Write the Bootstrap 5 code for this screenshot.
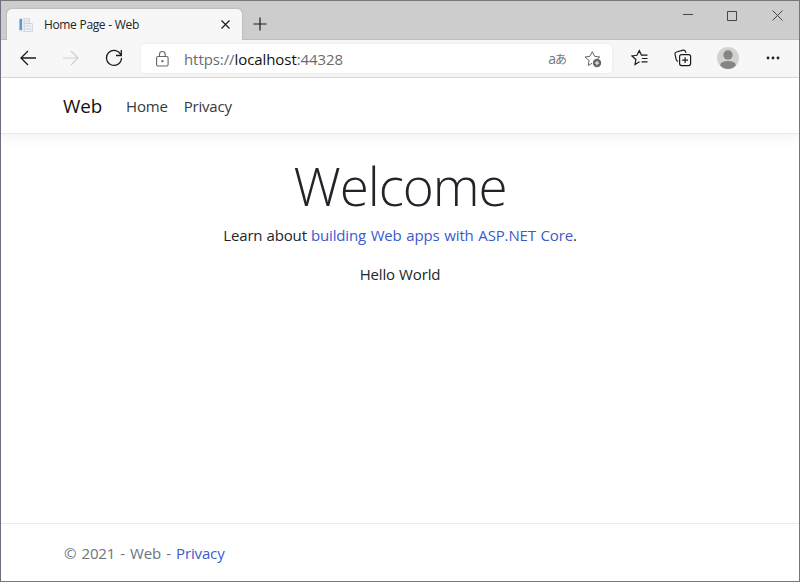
<!DOCTYPE html>
<html lang="en">
<head>
<meta charset="utf-8">
<title>Home Page - Web</title>
<link href="https://cdn.jsdelivr.net/npm/bootstrap@5.3.0/dist/css/bootstrap.min.css" rel="stylesheet">
<style>
body{font-family:"Open Sans","Noto Sans",sans-serif;font-size:15px;color:#212529;overflow:hidden}
svg{display:block;fill:none;stroke:#1b1b1b;flex:none}
a{text-decoration:none}
.win{height:582px;border:1px solid #77777b;border-left-color:#6d7080}
.strip{height:39px;background:#cdcdcd;border-bottom:1px solid #bdbdbd;padding-left:6px}
.tab-page{width:235px;height:31px;margin-top:8px;background:#f7f7f7;border-radius:5px 5px 0 0;padding:0 11px;font-size:12px;letter-spacing:-.36px;word-spacing:.3px;box-shadow:0 0 2px #999;clip-path:inset(-3px -3px 0 -3px)}
.tab-title{margin-left:10px}
.new-tab{margin:16px 0 0 11px}
.tools{height:38px;background:#f7f7f7;border-bottom:1px solid #d9d9d9;padding:0 0 1px 18px}
.address{width:471px;height:29px;margin:1px 0 0 18px;background:#fff;border-radius:4px;box-shadow:0 0 3px #e3e3e3;padding:0 10px 0 15px;color:#6b6b6b}
.url{font-size:15px;letter-spacing:-.08px;margin-left:15px;padding-top:1px}
.url b{font-weight:400;color:#111}
.gap-icon{margin-left:25px}
.translate{font:14px "Open Sans","Noto Sans CJK JP",sans-serif;letter-spacing:-1px;color:#777}
.translate small{font-size:12px}
.site-nav{height:56px;border-bottom:1px solid #e7e9eb;box-shadow:0 4px 12px rgba(0,0,0,.055);padding:1px 62px 0}
.site-nav a{color:#343a40;letter-spacing:-.2px}
.site-nav .site-brand{font-size:18.8px;color:#111;letter-spacing:-.1px}
.hero{padding-top:21px}
.hero h1{font-size:53px;line-height:62px;font-weight:300;letter-spacing:-1.1px;margin:0 0 6px}
.hero p{line-height:24px;margin-bottom:15px;letter-spacing:-.16px;word-spacing:.4px}
.hero p .link-blue{word-spacing:1px}
.link-blue{color:#3a5bcd}
.site-foot{height:58px;border-top:1px solid #e9ebed;padding:1px 63px 0;color:#6c757d;letter-spacing:-.14px;word-spacing:1.35px}
</style>
<script src="https://cdn.jsdelivr.net/npm/bootstrap@5.3.0/dist/js/bootstrap.bundle.min.js"></script>
</head>
<body>
<div class="win d-flex flex-column bg-white">
  <div class="strip d-flex flex-shrink-0">
    <div class="tab-page d-flex align-items-center">
      <svg width="16" height="16" viewBox="0 0 16 16" stroke="none"><path d="M1 1h7v14H1z" fill="#e3e8ed" stroke="none"/><path d="M1.500 2h2.500v11H1.500z" fill="#5b9bd5" stroke="none"/><path d="M6.500 1.500h5v5h3v8h-8z" fill="#eef0f4" stroke="#d3d7df"/><path d="M8 4h3M8 9h5M7 6.500h5M8 12h5" stroke="#cdd1da"/></svg>
      <span class="tab-title flex-grow-1">Home Page - Web</span>
      <svg width="11" height="11" viewBox="0 0 11 11" stroke-width="1.200"><path d="M1.500 1.500l8 8M9.500 1.500l-8 8"/></svg>
    </div>
    <svg class="new-tab" width="14" height="14" viewBox="0 0 14 14" stroke-width="1.200"><path d="M7 .5v13M.5 7h13"/></svg>
    <svg class="ms-auto" width="120" height="28" viewBox="0 0 120 28"><path d="M4 13.500h10M48.500 10.500h9v9h-9zM93.500 9.500l10 10M103.500 9.500l-10 10" stroke="#444"/></svg>
  </div>
  <div class="tools d-flex align-items-center flex-shrink-0">
    <svg width="18" height="18" viewBox="0 0 18 18" stroke-width="1.300"><path d="M9 2L2 9l7 7M2 9h15"/></svg>
    <svg class="gap-icon" width="18" height="18" viewBox="0 0 18 18" style="stroke:#cfcfcf" stroke-width="1.200"><path d="M9 2l7 7-7 7M16 9H1"/></svg>
    <svg class="gap-icon" width="18" height="18" viewBox="0 0 18 18" stroke-width="1.300"><path d="M16 6.200A7.500 7.500 0 1 0 16.500 9M16.300 1v5.500H11"/></svg>
    <div class="address d-flex align-items-center">
      <svg width="13" height="16" viewBox="0 0 13 16" style="stroke:#666" stroke-width="1.100"><rect x=".6" y="5.500" width="11.500" height="9.500" rx="1.500"/><path d="M3.500 5.500V3.400a2.850 2.850 0 0 1 5.700 0v2.100"/><circle cx="6.400" cy="10.200" r=".6" fill="#555"/></svg>
      <span class="url flex-grow-1">https://<b>localhost</b>:44328</span>
      <span class="translate">a<small>あ</small></span>
      <svg width="18" height="18" viewBox="0 0 18 18" style="margin-left:18px;stroke:#666"><path d="M8 13.300l-3.800 2.200.9-5L1 7l4.900-.7L8.300 1.700l2.300 4.600 5.200.7-2.300 1.800"/><circle cx="13" cy="13" r="4.200" fill="#666" stroke="none"/><path d="M10.800 13h4.400M13 10.800v4.400" stroke="#fff"/></svg>
    </div>
    <svg width="18" height="18" viewBox="0 0 18 18" style="margin-left:19px" stroke-width="1.200"><path d="M8.500 12.800l-4.500 2.700.9-5L1 7l4.900-.7L8.300 1.700l2.200 4.500H16.500M11 9.500h5.500M10.500 12.800h6"/></svg>
    <svg class="gap-icon" width="18" height="18" viewBox="0 0 18 18" stroke-width="1.200"><rect x="5.600" y="5.600" width="11" height="11" rx="2"/><path d="M11.100 8.200v5.800M8.200 11.100H14M4 12.500Q2.500 12 2.200 10.700L1 5.200Q.7 3.400 2.500 3L9 1.200Q10.900.8 11.500 2.500l.4 1.200"/></svg>
    <svg width="22" height="22" viewBox="0 0 22 22" style="margin-left:25px;stroke:none"><circle cx="11" cy="11" r="11" fill="#d4d2cf"/><circle cx="11" cy="8" r="4.700" fill="#858585"/><path d="M3.200 18.500q0-4.500 7.800-4.500t7.800 4.500Q15.500 22 11 22t-7.800-3.500" fill="#858585"/></svg>
    <svg width="14" height="4" viewBox="0 0 14 4" style="margin-left:27px;stroke:none;fill:#222"><circle cx="2" cy="2" r="1.400"/><circle cx="7" cy="2" r="1.400"/><circle cx="12" cy="2" r="1.400"/></svg>
  </div>
  <nav class="site-nav d-flex align-items-center flex-shrink-0">
    <a class="site-brand" href="#">Web</a>
    <a class="ms-4" href="#">Home</a>
    <a class="ms-3" href="#">Privacy</a>
  </nav>
  <main class="hero flex-grow-1 text-center">
    <h1>Welcome</h1>
    <p>Learn about <a class="link-blue" href="#">building Web apps with ASP.NET Core</a>.</p>
    <p>Hello World</p>
  </main>
  <footer class="site-foot d-flex align-items-center flex-shrink-0"><span>© 2021 - Web - <a class="link-blue" href="#">Privacy</a></span></footer>
</div>
</body>
</html>
